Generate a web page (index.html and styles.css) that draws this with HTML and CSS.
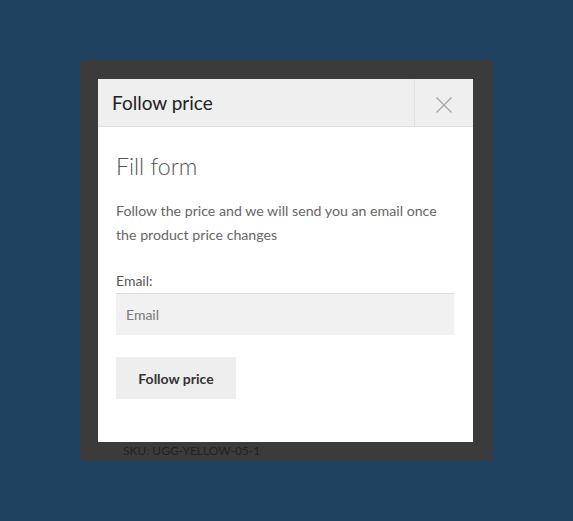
FILE: index.html
```html
<!DOCTYPE html>
<html>
<head>
<meta charset="utf-8">
<link rel="stylesheet" href="styles.css">
</head>
<body>
<div class="backdrop">
  <div class="panel">
    <div class="sku">SKU: UGG-YELLOW-05-1</div>
    <div class="modal">
      <div class="modal-header">
        <div class="modal-title">Follow price</div>
        <button class="close" aria-label="Close">
          <svg width="18" height="18" viewBox="0 0 18 18"><path d="M1.5 1.5 L16.5 16.5 M16.5 1.5 L1.5 16.5" stroke="#a9a9a9" stroke-width="1.4" fill="none"/></svg>
        </button>
      </div>
      <div class="modal-body">
        <h2 class="form-title">Fill form</h2>
        <p class="intro">Follow the price and we will send you an email once the product price changes</p>
        <label class="label">Email:</label>
        <input class="input" type="text" placeholder="Email">
        <button class="submit">Follow price</button>
      </div>
    </div>
  </div>
</div>
</body>
</html>
```
FILE: styles.css
```css
html, body { margin: 0; padding: 0; }
body {
  background: #1f4261;
  font-family: "Lato", "Open Sans", sans-serif;
  width: 573px;
  height: 521px;
  overflow: hidden;
}
.backdrop {
  padding-top: 60px;
  padding-left: 80px;
}
.panel {
  position: relative;
  width: 413px;
  height: 401px;
  background: #3b3b3b;
  border-radius: 5px;
  box-sizing: border-box;
  padding: 19px 20px 0 18px;
}
.sku {
  position: absolute;
  left: 43px;
  top: 383px;
  font-size: 12px;
  color: #222;
}
.modal {
  position: relative;
  background: #fff;
  width: 375px;
  height: 363px;
  display: flex;
  flex-direction: column;
}
.modal-header {
  display: flex;
  align-items: stretch;
  height: 48px;
  background: #efefef;
  border-bottom: 1px solid #dedede;
  box-sizing: border-box;
}
.modal-title {
  flex: 1;
  display: flex;
  align-items: center;
  padding-left: 14px;
  font-size: 19px;
  color: #222;
}
.close {
  width: 59px;
  border: 0;
  border-left: 1px solid #e2e2e2;
  background: transparent;
  display: flex;
  align-items: center;
  justify-content: center;
  padding: 0;
  padding-top: 4px;
}
.modal-body {
  padding: 24px 19px 0 18px;
  display: flex;
  flex-direction: column;
  align-items: flex-start;
}
.form-title {
  margin: 0;
  font-size: 23px;
  font-weight: 300;
  color: #555;
  line-height: 30px;
}
.intro {
  margin: 18px 0 0;
  font-size: 14.2px;
  line-height: 24px;
  color: #666;
}
.label {
  margin-top: 24px;
  font-size: 14px;
  color: #555;
  line-height: 20px;
}
.input {
  margin-top: 2px;
  width: 338px;
  height: 42px;
  box-sizing: border-box;
  border: 0;
  border-top: 1px solid #dcdcdc;
  background: #f1f1f1;
  padding: 0 10px;
  font-family: inherit;
  font-size: 14px;
  color: #777;
  outline: none;
}
.input::placeholder { color: #777; }
.submit {
  margin-top: 22px;
  width: 120px;
  height: 42px;
  border: 0;
  background: #eeeeee;
  font-family: inherit;
  font-size: 14px;
  font-weight: 700;
  color: #333;
  padding: 0;
}
```
